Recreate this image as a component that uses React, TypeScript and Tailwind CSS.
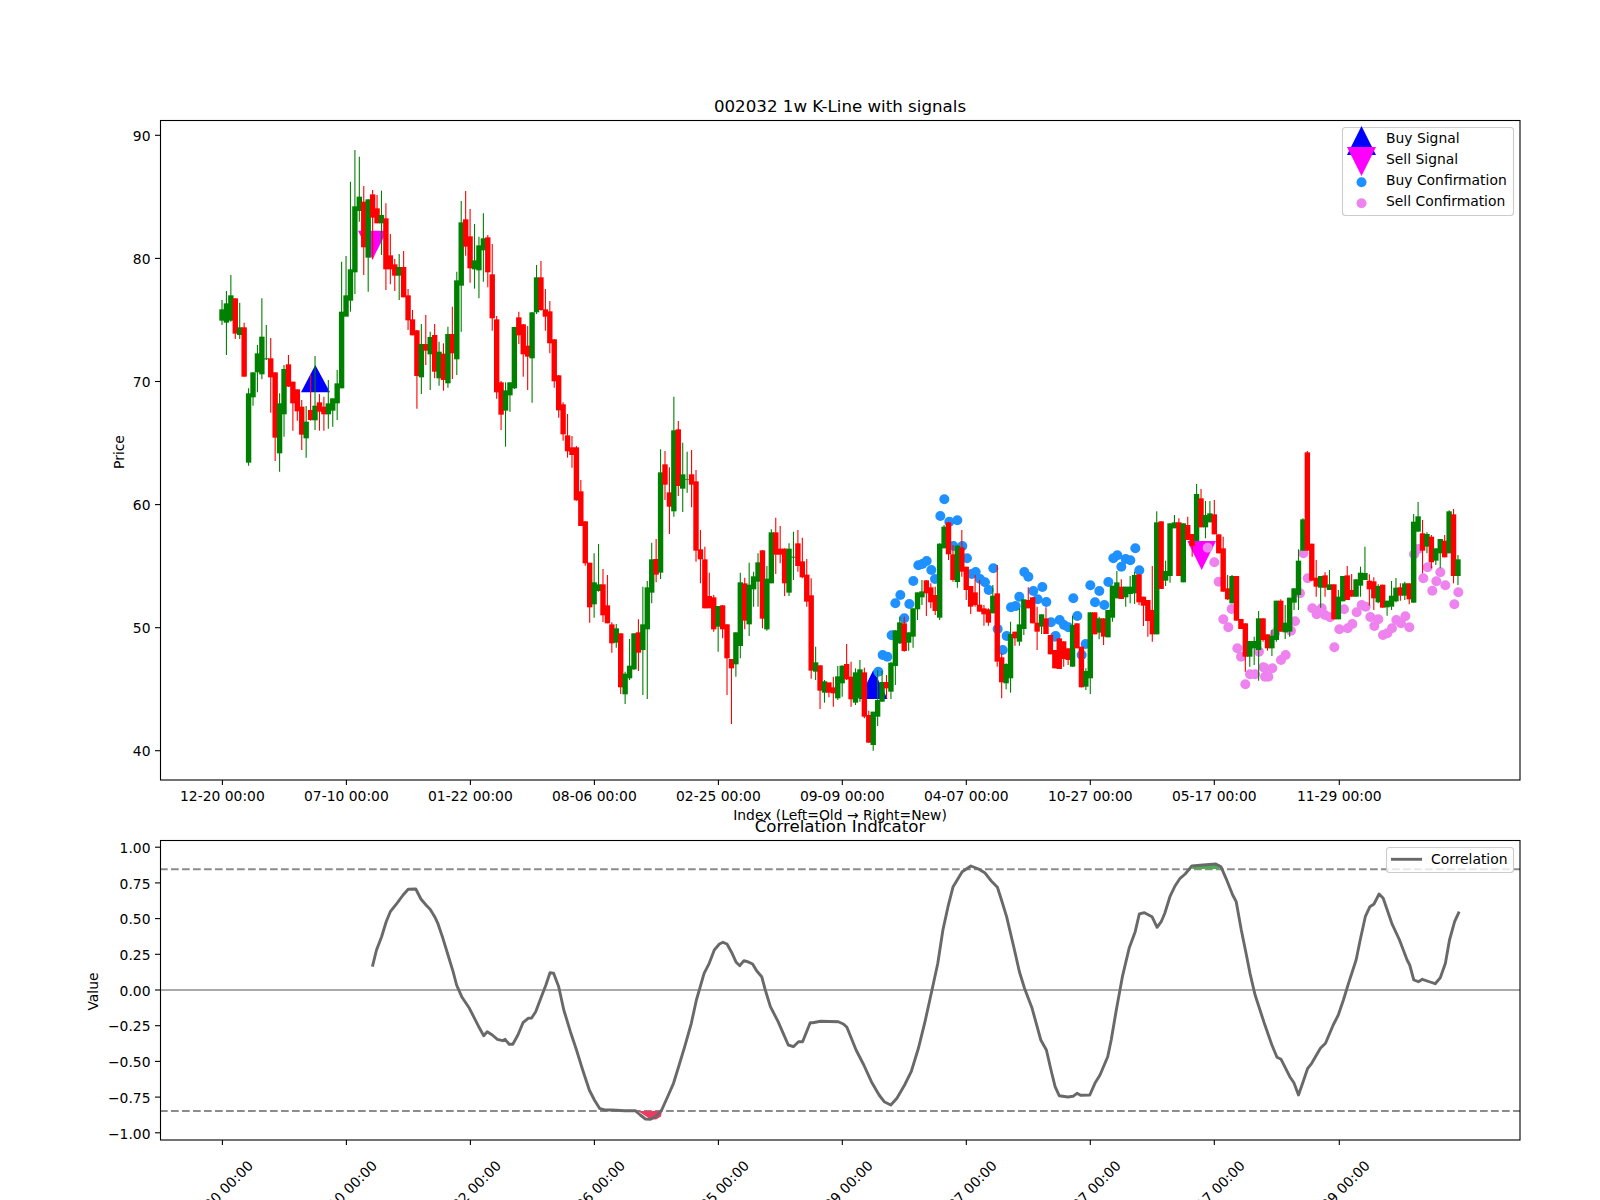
const segs: { x0: number; y0: number; d: string }[] = [
  { x0: 0, y0: 140, d: "g 480 508 542 555|g 453 490 548 645|g 405 466 542 545|r 475 475 581 597|g 488 562 585 597|r 548 562 710 710|g 745 760 968 977|g 697 697 772 797|g 615 640 697 757|g 475 590 703 718|g 555 655 658 660|r 594 655 712 818|r 697 697 893 963|g 760 790 940 995|g 675 687 823 890|r 645 673 740 740|r 725 725 790 872|r 748 748 814 842|r 780 800 884 930|g 798 845 895 953|r 705 810 840 842|g 648 797 841 870|r 762 787 815 872|r 770 800 823 872|g 720 790 823 866|g 775 775 812 860|g 690 730 790 840|g 365 515 745 745|g 348 466 530 515|g 125 388 482 515|g 30 199 397 462|g 50 170 213 245|r 138 185 322 405|g 178 178 353 455|r 150 163 233 358|r 165 205 250 250|g 152 225 250 345|r 190 235 388 450|r 282 346 388 433|r 357 373 407 453|g 342 381 407 480|r 333 381 472 472|r 447 466 541 570|r 510 538 586 586|r 570 571 708 806|g 552 612 712 762" },
  { x0: 0, y0: 190, d: "r 375 462 482 525|g 425 441 493 600|r 402 435 545 565|g 455 485 565 587|r 460 491 570 602|g 410 432 580 593|r 350 432 490 567|g 245 271 508 555|g 33 97 287 425|r 3 88 170 197|r 57 139 235 278|g 102 211 238 296|g 140 166 241 325|g 70 145 181 275|r 135 142 247 292|r 162 253 385 422|r 378 388 607 626|r 573 577 674 720|g 577 601 662 770|g 577 577 616 665|g 410 411 595 597|r 365 382 436 462|r 402 403 493 560|r 408 467 500 600|g 366 367 505 638|g 225 262 367 372|r 213 262 360 362|r 297 358 380 422|r 333 364 460 490|r 447 448 574 593|r 555 556 661 683|r 637 643 733 752|r 672 736 784 803|r 738 772 795 833|r 768 772 931 932|r 870 904 1008 1008|r 993 994 1120 1127|r 1118 1118 1252 1298|g 1090 1177 1243 1283|g 1062 1183 1203 1205|r 1137 1183 1276 1296|r 1155 1246 1300 1300|r 1297 1303 1360 1388|g 1302 1315 1358 1373|r 1330 1330 1492 1512|g 1445 1451 1513 1542|g 1347 1427 1465 1470|g 1330 1330 1438 1440" },
  { x0: 0, y0: 390, d: "r 688 727 788 843|g 590 703 780 915|g 573 592 718 927|g 458 508 608 640|r 447 507 554 577|g 178 247 548 567|r 183 223 284 330|r 232 307 350 432|g 20 121 364 380|r 93 118 288 318|g 158 253 296 366|g 185 268 270 308|r 180 253 284 352|r 240 274 482 515|r 420 478 508 580|r 470 508 655 655|r 548 618 655 650|r 615 622 718 725|g 648 648 710 785|r 645 646 718 745|r 703 703 805 915|r 807 807 835 1002|g 727 727 823 860|g 548 577 768 805|r 563 580 692 718|g 518 584 703 738|g 545 559 598 650|g 490 517 575 650|r 480 481 686 715|g 528 566 718 722|g 418 427 580 580|r 383 427 494 552|r 408 476 494 520|r 475 476 580 618|g 460 476 608 618|g 425 500 503 570|r 420 460 528 545|r 443 514 562 565|r 507 554 635 650|r 565 616 842 866|g 770 817 845 870|r 826 826 902 957|g 870 874 908 938|r 880 877 908 922|r 860 892 910 950|g 828 859 925 930|g 826 827 880 920" },
  { x0: 0, y0: 480, d: "r 492 552 598 600|r 545 590 658 680|g 565 577 668 675|g 540 568 655 665|r 563 577 710 715|r 692 705 788 788|g 695 695 795 812|g 570 660 710 738|g 572 606 665 665|r 585 606 625 655|g 545 548 635 657|g 451 451 558 615|g 410 427 490 492|r 410 430 513 515|g 457 457 488 512|g 385 385 470 503|g 337 337 388 420|g 300 334 352 375|r 300 301 340 408|r 310 322 367 385|r 320 345 393 405|g 190 191 413 420|g 135 140 205 205|r 127 127 223 240|r 195 223 300 305|g 195 197 306 323|r 150 202 275 290|r 260 260 330 360|r 318 318 380 402|r 285 337 375 380|r 300 374 395 395|r 375 385 403 437|r 385 388 428 437|g 315 347 400 400|r 255 340 545 560|r 520 532 607 655|g 550 552 610 628|g 425 462 595 638|r 455 455 475 497|g 385 433 485 497|g 358 358 447 465|r 322 360 385 385|r 352 352 430 430|r 380 428 455 510|g 403 403 440 462|r 382 415 462 462|r 465 465 523 523|r 510 510 565 565" },
  { x0: 0, y0: 470, d: "r 505 505 597 597|r 514 514 567 590|r 535 535 570 585|g 437 465 590 590|r 460 460 535 535|r 530 530 652 652|g 595 603 650 660|g 427 427 625 672|r 427 427 493 493|g 440 445 488 508|r 445 445 500 525|g 420 420 502 502|g 347 347 443 455|g 303 337 385 385|r 328 350 387 387|g 350 350 382 410|g 318 350 372 400|g 305 315 370 402|r 313 313 397 405|r 380 380 407 468|r 390 390 453 500|r 288 420 493 515|g 124 157 493 493|r 154 154 357 357|g 272 303 332 348|g 160 160 318 338|g 135 157 175 175|r 145 157 318 318|g 160 160 337 337|r 140 165 210 210|r 192 192 228 260|g 42 72 213 213|r 57 85 172 172|g 93 135 172 205|g 93 130 157 157|r 90 133 193 193|r 193 193 250 250|r 200 235 365 365|r 315 355 388 390|g 315 318 400 400|r 318 318 452 452|r 447 447 477 477|r 460 460 560 605|g 513 513 560 590|g 500 513 535 585|g 423 445 540 632" },
  { x0: 0, y0: 440, d: "r 535 535 600 605|r 583 583 625 632|g 570 587 625 648|g 482 482 600 605|r 478 482 575 575|g 495 548 577 597|g 473 473 575 590|g 445 445 488 510|g 328 362 465 510|g 235 238 332 332|r 33 37 332 332|r 311 311 422 422|r 360 413 440 470|g 408 408 443 503|r 397 406 443 470|g 390 433 450 450|r 433 433 538 538|g 450 470 538 538|g 408 408 484 484|r 378 406 480 480|r 402 450 470 470|g 418 418 470 470|g 380 398 437 470|g 320 399 420 420|r 403 422 448 497|r 412 424 475 510|g 433 438 487 490|r 434 434 503 503|g 482 482 502 527|g 423 467 500 510|g 414 443 484 487|r 430 442 467 482|g 425 430 467 480|r 430 430 478 493|g 222 245 488 488|g 186 229 275 275|r 240 280 332 400|g 277 282 320 340|r 285 290 367 385|g 325 325 362 375|g 297 297 340 385|r 285 302 352 352|g 211 214 340 340|r 207 223 408 430|g 345 358 408 435" },
];

const bars = segs.flatMap((s) =>
  s.d.split("|").map((b) => {
    const [c, a, t, u, w] = b.split(" ");
    const f = (n: string) => s.y0 + Number(n) / 3;
    return { c: c === "g" ? "#008000" : "#ff0000", wt: f(a), bt: f(t), bb: f(u), wb: f(w) };
  })
);

const pts = (list: number[][], x0: number, y0: number, sx = 3, sy = 3) =>
  list.map(([x, y]) => [x0 + x / sx, y0 + y / sy]);

const blue = [
  ...pts([[298,58],[286,108],[313,125],[337,121],[100,575],[113,525],[127,530],[140,466],[178,415],[151,370],[166,345],[193,372],[205,303],[220,256],[232,252],[245,243],[259,270],[270,297],[325,198],[352,198],[366,235],[380,282],[392,276],[405,297],[420,307],[431,330],[445,265],[458,447],[473,510],[485,468],[498,382],[512,378],[523,350],[538,276],[550,290],[565,333],[592,321],[578,358],[604,366],[618,427],[630,470]], 845, 480),
  ...pts([[2,498],[14,450],[27,465],[40,472],[55,385],[67,438],[92,522],[80,555],[106,346],[120,397],[133,363],[148,405],[160,336],[175,265],[187,256],[199,290],[212,267],[226,271],[241,235],[253,301]], 1055, 470),
];
const pink = [
  ...pts([[458,233],[478,277],[491,335],[530,417],[505,448],[520,472],[547,535],[558,560],[585,613],[600,613],[571,643],[612,545],[625,592],[630,620]], 1055, 470),
  ...pts([[10,710],[0,685],[22,685],[48,660],[62,645],[30,580],[78,572],[90,544],[105,460],[115,340],[128,415],[142,505],[155,523],[170,505],[180,525],[195,532],[208,622],[223,568],[237,508],[248,565],[262,552],[275,517],[290,495],[302,500],[316,531],[328,558],[340,538],[354,585],[367,580],[381,565],[394,540],[408,550],[421,529],[433,562],[447,343],[460,327],[475,415],[488,382],[502,452],[514,424],[526,397],[541,436],[568,493],[580,457]], 1265, 440),
];

const corr = [
  ...pts([[730,500],[738,450],[748,410],[757,365],[765,335],[778,310],[790,285],[800,268],[815,267],[825,297],[835,315],[843,328],[852,350],[858,370],[868,415],[878,465],[888,515],[895,555],[905,590],[920,625],[930,655],[940,685],[948,707],[955,695],[965,705],[975,718],[985,722],[990,718],[998,733],[1005,733],[1015,705],[1025,668],[1035,655],[1042,654],[1050,635],[1060,595],[1070,555],[1078,518],[1085,520],[1095,560],[1105,630],[1118,695],[1130,750],[1142,810],[1155,870],[1165,900],[1175,925],[1185,930],[1200,930],[1225,932],[1245,932],[1255,945],[1265,957],[1275,958],[1285,950],[1297,930],[1310,885],[1320,850],[1330,800],[1342,740],[1355,670],[1365,600],[1380,520],[1390,490],[1400,450],[1410,432],[1417,427],[1425,432],[1435,460],[1443,487],[1450,497],[1458,482],[1465,485],[1475,492],[1483,512],[1493,530],[1500,570],[1510,620],[1525,665],[1535,700],[1545,735],[1555,740],[1565,725]], 0, 800, 1.96),
  ...pts([[5,725],[20,668],[25,668],[40,664],[75,665],[85,672],[92,682],[110,750],[125,795],[140,845],[155,885],[165,905],[178,915],[190,895],[205,855],[218,815],[232,745],[245,665],[258,575],[270,490],[280,390],[290,320],[300,260],[318,215],[335,198],[350,207],[362,218],[375,243],[387,262],[395,300],[405,350],[418,435],[430,515],[440,565],[455,625],[472,720],[483,750],[492,810],[500,860],[508,887],[525,891],[535,889],[543,880],[550,886],[568,885],[578,850],[588,825],[603,770],[610,720],[620,630],[632,530],[645,445],[657,395],[665,342],[675,338],[690,350],[700,382],[708,365],[715,340],[725,290],[735,258],[745,235],[755,222],[768,198],[790,195],[815,192],[825,200],[835,235],[848,285],[855,305],[865,390],[875,465],[882,520],[892,585],[910,670],[925,735],[935,772],[943,778],[960,830],[968,848],[977,885],[985,850],[995,805],[1003,790],[1020,745],[1030,730],[1045,675],[1055,645],[1065,600],[1075,550],[1090,480],[1098,420],[1108,350],[1117,320],[1125,312],[1135,282],[1143,295],[1160,370],[1175,420],[1190,480],[1195,495],[1203,540],[1212,545],[1220,538],[1235,546],[1245,551],[1255,533],[1265,490],[1273,420],[1283,365],[1292,335]], 800, 800, 1.96),
];
const toPath = (p: number[][]) => p.map(([x, y]) => `${x.toFixed(1)},${y.toFixed(1)}`).join(" ");

const xTicks: [number, string][] = [
  [222.4, "12-20 00:00"], [346.4, "07-10 00:00"], [470.4, "01-22 00:00"], [594.4, "08-06 00:00"], [718.4, "02-25 00:00"],
  [842.3, "09-09 00:00"], [966.3, "04-07 00:00"], [1090.3, "10-27 00:00"], [1214.3, "05-17 00:00"], [1339.3, "11-29 00:00"],
];
const pTicks: [number, string][] = [[135.3, "90"], [258.4, "80"], [381.5, "70"], [504.6, "60"], [627.7, "50"], [750.7, "40"]];
const vTicks: [string, number][] = [["1.00", 1], ["0.75", 0.75], ["0.50", 0.5], ["0.25", 0.25], ["0.00", 0], ["−0.25", -0.25], ["−0.50", -0.5], ["−0.75", -0.75], ["−1.00", -1]];

export default function App() {
  return (
    <div className="w-[1600px] h-[1200px] bg-white overflow-hidden">
      <svg width={1600} height={1200} viewBox="0 0 1600 1200" className="block font-['DejaVu_Sans',sans-serif] text-[13.89px] fill-black">
        <rect x={160} y={120} width={1360} height={660} fill="#fff" />
        <polygon points="315.3,365 301,392.3 330,392.3" fill="#0000ff" />
        <polygon points="873.3,670 859,699 887.5,699" fill="#0000ff" />
        <polygon points="358,230.7 387,230.7 372.5,259.5" fill="#ff00ff" />
        <polygon points="1187.3,541 1216,541 1201.7,570" fill="#ff00ff" />
        {blue.map(([x, y], i) => <circle key={i} cx={x} cy={y} r={5} fill="#1e90ff" />)}
        {pink.map(([x, y], i) => <circle key={i} cx={x} cy={y} r={5} fill="#ee82ee" />)}
        {bars.map((b, i) => {
          const x = 222 + 4.43 * i;
          return (
            <g key={i}>
              <line x1={x} x2={x} y1={b.wt} y2={b.wb} stroke={b.c} strokeWidth={1.1} />
              <rect x={x - 2.7} y={b.bt} width={5.4} height={Math.max(b.bb - b.bt, 0.5)} fill={b.c} />
            </g>
          );
        })}
        <rect x={160.5} y={120.5} width={1359.5} height={659.5} fill="none" stroke="#000" strokeWidth={1.1} />

        {xTicks.map(([x, l]) => (
          <g key={l}>
            <line x1={x} x2={x} y1={780} y2={785} stroke="#000" strokeWidth={1.1} />
            <text x={x} y={801} textAnchor="middle">{l}</text>
          </g>
        ))}
        {pTicks.map(([y, l]) => (
          <g key={l}>
            <line x1={155} x2={160} y1={y} y2={y} stroke="#000" strokeWidth={1.1} />
            <text x={150.5} y={y + 5.7} textAnchor="end">{l}</text>
          </g>
        ))}
        <text x={840} y={111.5} textAnchor="middle" className="text-[16.67px]">002032 1w K-Line with signals</text>
        <text x={124} y={452} textAnchor="middle" transform="rotate(-90 124 452)">Price</text>
        <text x={840} y={820} textAnchor="middle">Index (Left=Old → Right=New)</text>

        <rect x={1342.5} y={127.5} width={171} height={88} rx={3} fill="#fff" fillOpacity={0.8} stroke="#cccccc" strokeWidth={1.1} />
        <polygon points="1361.5,126 1347,155 1376,155" fill="#0000ff" />
        <polygon points="1347,147 1376,147 1361.5,176" fill="#ff00ff" />
        <circle cx={1361.5} cy={182.3} r={5} fill="#1e90ff" />
        <circle cx={1361.5} cy={203.3} r={5} fill="#ee82ee" />
        <text x={1386} y={143}>Buy Signal</text>
        <text x={1386} y={164}>Sell Signal</text>
        <text x={1386} y={185}>Buy Confirmation</text>
        <text x={1386} y={206}>Sell Confirmation</text>

        <line x1={160} x2={1520} y1={869.2} y2={869.2} stroke="#8c8c8c" strokeWidth={2.08} strokeDasharray="7.7 3.3" />
        <line x1={160} x2={1520} y1={1111} y2={1111} stroke="#8c8c8c" strokeWidth={2.08} strokeDasharray="7.7 3.3" />
        <line x1={160} x2={1520} y1={990} y2={990} stroke="#aaaaaa" strokeWidth={2.1} />
        <polygon points="638,1111 644,1115 650,1119 656,1119.5 661,1116.5 662,1111" fill="#ee3a63" />
        <polygon points="1192,869 1193,866 1203,865 1219,864 1221,866.5 1219,869" fill="#4caf50" />
        <polyline points={toPath(corr)} fill="none" stroke="#696969" strokeWidth={2.9} strokeLinejoin="round" />
        <rect x={160.5} y={840.5} width={1359.5} height={299.5} fill="none" stroke="#000" strokeWidth={1.1} />
        {xTicks.map(([x, l]) => (
          <g key={l}>
            <line x1={x} x2={x} y1={1140} y2={1145} stroke="#000" strokeWidth={1.1} />
            <text x={x - 2} y={1198} textAnchor="middle" transform={`rotate(-45 ${x - 2} 1193)`}>{l}</text>
          </g>
        ))}
        {vTicks.map(([l, v]) => {
          const y = 990 - v * 142.8;
          return (
            <g key={l}>
              <line x1={155} x2={160} y1={y} y2={y} stroke="#000" strokeWidth={1.1} />
              <text x={150.5} y={y + 5.7} textAnchor="end">{l}</text>
            </g>
          );
        })}
        <text x={98} y={991.5} textAnchor="middle" transform="rotate(-90 98 991.5)">Value</text>
        <text x={840} y={831.5} textAnchor="middle" className="text-[16.67px]">Correlation Indicator</text>
        <rect x={1386.5} y={847.5} width={127} height={25} rx={3} fill="#fff" fillOpacity={0.8} stroke="#cccccc" strokeWidth={1.1} />
        <line x1={1391} x2={1422} y1={859.3} y2={859.3} stroke="#696969" strokeWidth={2.9} />
        <text x={1431} y={863.8}>Correlation</text>
      </svg>
    </div>
  );
}
